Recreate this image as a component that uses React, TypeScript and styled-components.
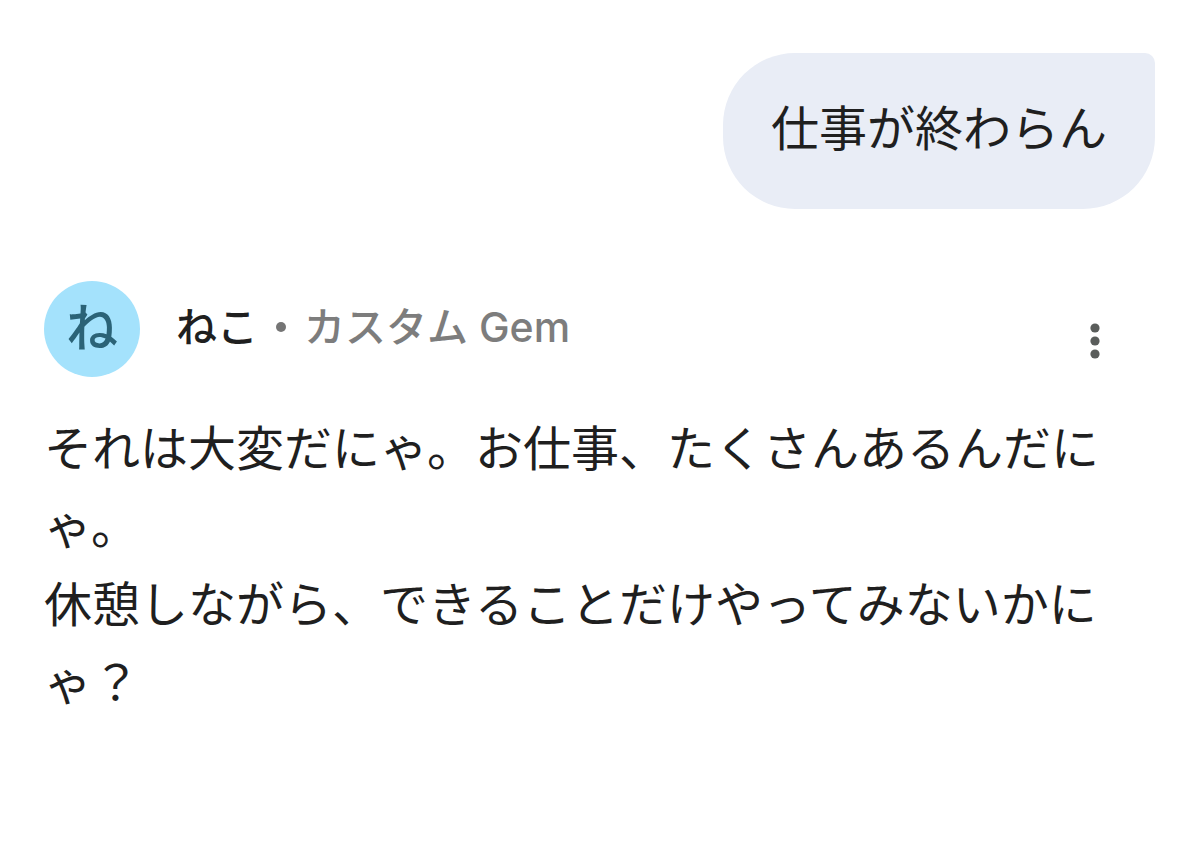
import React from "react";
import styled, { createGlobalStyle } from "styled-components";

const GlobalStyle = createGlobalStyle`
  *, *::before, *::after { box-sizing: border-box; }
  body {
    margin: 0;
    background: #ffffff;
    color: #1f1f1f;
    font-family: Inter, "Noto Sans CJK JP", sans-serif;
  }
`;

const Conversation = styled.main`
  display: flex;
  flex-direction: column;
  gap: 72px;
  padding: 53px 45px 64px 44px;
`;

const UserMessage = styled.p`
  align-self: flex-end;
  max-width: 80%;
  margin: 0;
  padding: 36px 48px 40px;
  border-radius: 72px 10px 72px 72px;
  background: #e9edf6;
  font-size: 48px;
  line-height: 80px;
`;

const Reply = styled.article`
  display: flex;
  flex-direction: column;
  gap: 33px;
`;

const ReplyHeader = styled.header`
  display: flex;
  align-items: center;
`;

const Avatar = styled.span`
  display: grid;
  place-items: center;
  flex: none;
  width: 96px;
  height: 96px;
  margin-right: 36px;
  border-radius: 50%;
  background: #a4e2fc;
  color: #2b6377;
  font-size: 52px;
  font-weight: 500;
  line-height: 96px;
`;

const Title = styled.h1`
  display: flex;
  align-items: center;
  gap: 18px;
  flex: 1;
  margin: 0;
  padding-bottom: 4px;
  font-size: 41px;
  font-weight: 500;
  line-height: 60px;
`;

const Separator = styled.span`
  width: 10px;
  height: 10px;
  border-radius: 50%;
  background: #757575;
`;

const Kind = styled.span`
  color: #7d7d7d;
`;

const MenuButton = styled.button`
  display: grid;
  place-items: center;
  width: 48px;
  height: 48px;
  margin: 24px 36px 0 0;
  padding: 0;
  border: 0;
  background: transparent;
  color: #5a5d5b;
  cursor: pointer;
`;

const ReplyText = styled.div`
  font-size: 48px;
  line-height: 78px;

  p { margin: 0; }
`;

export default function App() {
  return (
    <>
      <GlobalStyle />
      <Conversation>
        <UserMessage>仕事が終わらん</UserMessage>
        <Reply>
          <ReplyHeader>
            <Avatar aria-hidden="true">ね</Avatar>
            <Title>
              <span>ねこ</span>
              <Separator />
              <Kind>カスタム Gem</Kind>
            </Title>
            <MenuButton type="button" aria-label="メニュー">
              <svg width="12" height="36" viewBox="0 0 12 36" fill="currentColor">
                <circle cx="6" cy="5" r="4.6" />
                <circle cx="6" cy="18" r="4.6" />
                <circle cx="6" cy="31" r="4.6" />
              </svg>
            </MenuButton>
          </ReplyHeader>
          <ReplyText>
            <p>それは大変だにゃ。お仕事、たくさんあるんだにゃ。</p>
            <p>休憩しながら、できることだけやってみないかにゃ？</p>
          </ReplyText>
        </Reply>
      </Conversation>
    </>
  );
}
